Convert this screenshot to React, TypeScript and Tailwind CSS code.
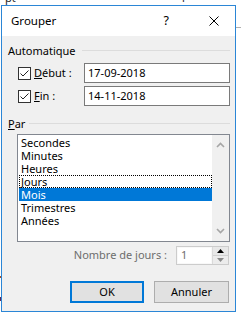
import React from "react";

const font = { fontFamily: '"Noto Sans", "Open Sans", sans-serif' };

function Check() {
  return (
    <div className="w-[13px] h-[13px] border border-[#333333] bg-white flex items-center justify-center shrink-0">
      <svg width="11" height="11" viewBox="0 0 11 11">
        <path d="M1.5 5.5 L4 8 L9.5 2.5" fill="none" stroke="#222" strokeWidth="1" />
      </svg>
    </div>
  );
}

function GroupHeader({ children, gap }: { children: React.ReactNode; gap: string }) {
  return (
    <div className="flex items-center h-[14px] pl-[6px] pr-[5px]">
      <span className="leading-none">{children}</span>
      <div className={`flex-1 h-px bg-[#dcdcdc] ${gap}`} />
    </div>
  );
}

export default function App() {
  const items = ["Secondes", "Minutes", "Heures", "Jours", "Mois", "Trimestres", "Années"];
  return (
    <div className="relative w-[241px] h-[313px] bg-white overflow-hidden text-[11px] text-black" style={font}>
      {/* spreadsheet behind */}
      <div className="absolute left-[5px] top-[-8px] text-[11px] leading-[12px] text-[#222]">pt</div>
      <div className="absolute left-[180px] top-[-8px] text-[11px] leading-[12px] text-[#222]">1</div>
      <div className="absolute left-[236px] top-[27px] w-[5px] h-px bg-[#b0b0b0]" />
      <div className="absolute left-0 top-[276px] w-px h-[2px] bg-[#a0522d]" />
      <div className="absolute left-0 top-[297px] w-px h-[4px] bg-[#5a2a5a]" />

      {/* dialog */}
      <div className="absolute left-[1px] top-[5px] w-[235px] h-[307px] border border-[#2b86d6] bg-[#f0f0f0] flex flex-col">
        {/* title bar */}
        <div className="h-[30px] bg-white flex items-center shrink-0">
          <span className="ml-[9px] text-[11.5px]">Grouper</span>
          <span className="ml-auto mr-[40px] text-[12.5px]">?</span>
          <svg className="mr-[16px]" width="10" height="10" viewBox="0 0 10 10">
            <path d="M0.5 0.5 L9.5 9.5 M9.5 0.5 L0.5 9.5" stroke="#000" strokeWidth="1" />
          </svg>
        </div>

        {/* body */}
        <div className="flex flex-col">
          <div className="mt-[7px]">
            <GroupHeader gap="ml-[6px]">Automatique</GroupHeader>
          </div>

          <div className="mt-[6px] flex items-center h-[20px] pl-[16px] pr-[5px]">
            <Check />
            <span className="ml-[3px]"><u>D</u>ébut :</span>
            <div className="ml-auto w-[146px] h-[20px] bg-white border border-[#7a7a7a] flex items-center pl-[3px]">17-09-2018</div>
          </div>
          <div className="mt-[3px] flex items-center h-[20px] pl-[16px] pr-[5px]">
            <Check />
            <span className="ml-[3px]"><u>F</u>in :</span>
            <div className="ml-auto w-[146px] h-[20px] bg-white border border-[#7a7a7a] flex items-center pl-[3px]">14-11-2018</div>
          </div>

          <div className="mt-[10px]">
            <GroupHeader gap="ml-[4px]"><u>P</u>ar</GroupHeader>
          </div>

          <div className="mt-[4px] ml-[15px] w-[213px] h-[108px] border border-[#828790] bg-white flex">
            <div className="flex-1 flex flex-col pt-[1px] pl-[1px]">
              {items.map((it) => {
                if (it === "Mois")
                  return (
                    <div key={it} className="h-[13px] leading-[13px] bg-[#0078d7] text-white pl-[2px]">{it}</div>
                  );
                if (it === "Jours")
                  return (
                    <div key={it} className="h-[13px] leading-[11px] border border-dotted border-black pl-[1px]">{it}</div>
                  );
                return (
                  <div key={it} className="h-[13px] leading-[13px] pl-[2px]">{it}</div>
                );
              })}
            </div>
            <div className="w-[17px] bg-[#f0f0f0] flex flex-col items-center justify-between py-[7px]">
              <svg width="9" height="6" viewBox="0 0 9 6">
                <path d="M1 5 L4.5 1.5 L8 5" fill="none" stroke="#a6a6a6" strokeWidth="1.6" />
              </svg>
              <svg width="9" height="6" viewBox="0 0 9 6">
                <path d="M1 1 L4.5 4.5 L8 1" fill="none" stroke="#a6a6a6" strokeWidth="1.6" />
              </svg>
            </div>
          </div>

          <div className="mt-[4px] flex items-center h-[19px] pr-[6px]">
            <span className="ml-auto text-[#6d6d6d]">Nombre de jours :</span>
            <div className="ml-[9px] w-[53px] h-[19px] border border-[#cccccc] bg-[#f8f8f8] flex">
              <div className="flex-1 flex items-center pl-[3px] text-[#6d6d6d] bg-white m-[1px]">1</div>
              <div className="w-[16px] flex flex-col border-l border-[#dadada]">
                <div className="flex-1 bg-[#e8e8e8] flex items-center justify-center border-b border-[#d0d0d0]">
                  <svg width="7" height="4" viewBox="0 0 7 4"><path d="M0 4 L3.5 0 L7 4 Z" fill="#000" /></svg>
                </div>
                <div className="flex-1 bg-[#ececec] flex items-center justify-center">
                  <svg width="7" height="4" viewBox="0 0 7 4"><path d="M0 0 L3.5 4 L7 0 Z" fill="#8a8a8a" /></svg>
                </div>
              </div>
            </div>
          </div>

          <div className="mt-[16px] flex items-center pl-[68px]">
            <div className="w-[74px] h-[22px] border-2 border-[#0078d7] bg-[#e1e1e1] flex items-center justify-center">OK</div>
            <div className="ml-[10px] w-[75px] h-[22px] border border-[#adadad] bg-[#e1e1e1] flex items-center justify-center">Annuler</div>
          </div>
        </div>
      </div>
    </div>
  );
}
